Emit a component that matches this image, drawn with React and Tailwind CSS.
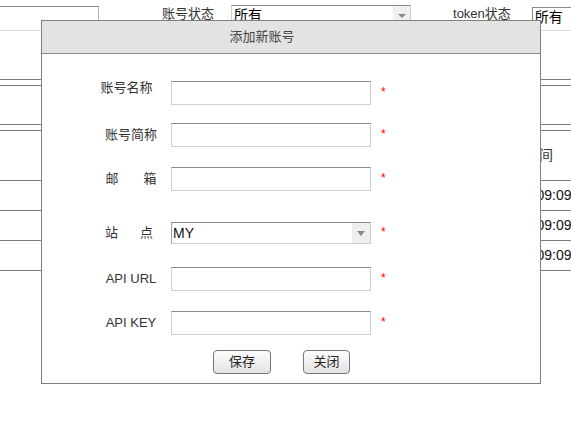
import React from "react";

const font = { fontFamily: '"Liberation Sans", "Noto Sans CJK SC", sans-serif' };

function Field({ children, labelClass = "" }) {
  return (
    <div className="flex items-center h-[24px]">
      <div className={"w-[70px] ml-[54px] flex justify-center text-[13px] text-[#333] " + labelClass}>
        {children}
      </div>
      <div className="ml-[5px] w-[200px] h-[24px] border border-[#cfcfcf] border-t-[#8a8a8a] bg-white" />
      <span className="ml-[10px] text-[12px] leading-none text-[#ff0000] mb-[2px]">*</span>
    </div>
  );
}

export default function App() {
  const rows = ["2019-07-18 09:09:09", "2019-07-18 09:09:09", "2019-07-18 09:09:09"];

  return (
    <div className="relative w-[571px] h-[443px] overflow-hidden bg-white text-[13px] text-[#333]" style={font}>
      {/* page behind the dialog */}
      <div className="flex items-start h-[31px] border-b border-[#dedede]">
        <div className="mt-[6px] w-[99px] h-[24px] border-t border-r border-[#b5b5b5] border-t-[#8a8a8a]" />
        <div className="ml-[63px] mt-[5px] leading-[18px]">账号状态</div>
        <div className="ml-[17px] mt-[5px] w-[180px] h-[22px] border border-[#cfcfcf] border-t-[#8a8a8a] flex">
          <div className="flex-1 pl-[2px] text-[14px] text-black leading-[18px]">所有</div>
          <div className="w-[17px] bg-[#f0f0f0] flex items-center justify-center">
            <div className="w-0 h-0 border-l-[4px] border-r-[4px] border-t-[4px] border-l-transparent border-r-transparent border-t-[#888]" />
          </div>
        </div>
        <div className="ml-[42px] mt-[5px] leading-[18px]">token状态</div>
        <div className="ml-[21px] mt-[7px] flex-1 h-[22px] border-t border-l border-[#8a8a8a] pl-[2px] text-[14px] text-black leading-[18px]">
          所有
        </div>
      </div>

      <div className="mt-[48px] h-[7px] border-y border-[#7a7a7a]" />
      <div className="mt-[38px] h-[7px] border-y border-[#7a7a7a]" />
      <div className="h-[50px] border-b border-[#7a7a7a] flex items-center justify-end pr-[18px] text-[14px]">
        创建时间
      </div>
      {rows.map((t, i) => (
        <div key={i} className="h-[30px] border-b border-[#7a7a7a] flex items-center pl-[461px] whitespace-nowrap text-[14px] text-[#111]">
          {t}
        </div>
      ))}

      {/* dialog */}
      <div className="absolute left-[41px] top-[20px] w-[500px] border border-[#808080] bg-white">
        <div className="h-[33px] bg-[#e3e3e3] border-b border-[#888] flex items-center justify-center pr-[58px] text-[13px] text-[#444]">
          添加新账号
        </div>
        <div className="pt-[27px] pb-[9px] flex flex-col">
          <Field labelClass="mb-[10px] pr-[9px]">账号名称</Field>
          <div className="mt-[18px]">
            <Field>账号简称</Field>
          </div>
          <div className="mt-[20px]">
            <Field>
              <span className="flex w-[51px] justify-between"><span>邮</span><span>箱</span></span>
            </Field>
          </div>
          <div className="mt-[31px] flex items-center h-[22px]">
            <div className="w-[70px] ml-[54px] flex justify-center text-[13px] text-[#333] pr-[4px]">
              <span className="flex w-[48px] justify-between"><span>站</span><span>点</span></span>
            </div>
            <div className="ml-[5px] w-[200px] h-[22px] border border-[#cfcfcf] border-t-[#8a8a8a] border-l-[#a0a0a0] flex">
              <div className="flex-1 pl-[1px] text-[14px] text-[#111] leading-[20px]">MY</div>
              <div className="w-[18px] bg-[#eeeeee] flex items-center justify-center">
                <div className="w-0 h-0 border-l-[4px] border-r-[4px] border-t-[5px] border-l-transparent border-r-transparent border-t-[#888]" />
              </div>
            </div>
            <span className="ml-[10px] text-[12px] leading-none text-[#ff0000] mb-[2px]">*</span>
          </div>
          <div className="mt-[23px]">
            <Field>API URL</Field>
          </div>
          <div className="mt-[20px]">
            <Field>API KEY</Field>
          </div>
          <div className="mt-[15px] flex pl-[171px]">
            <button className="w-[58px] h-[24px] rounded-[4px] border border-[#777] bg-gradient-to-b from-[#fdfdfd] to-[#e2e2e2] text-[13px] text-[#222]">
              保存
            </button>
            <button className="ml-[32px] w-[47px] h-[24px] rounded-[4px] border border-[#777] bg-gradient-to-b from-[#fdfdfd] to-[#e2e2e2] text-[13px] text-[#222]">
              关闭
            </button>
          </div>
        </div>
      </div>
    </div>
  );
}
